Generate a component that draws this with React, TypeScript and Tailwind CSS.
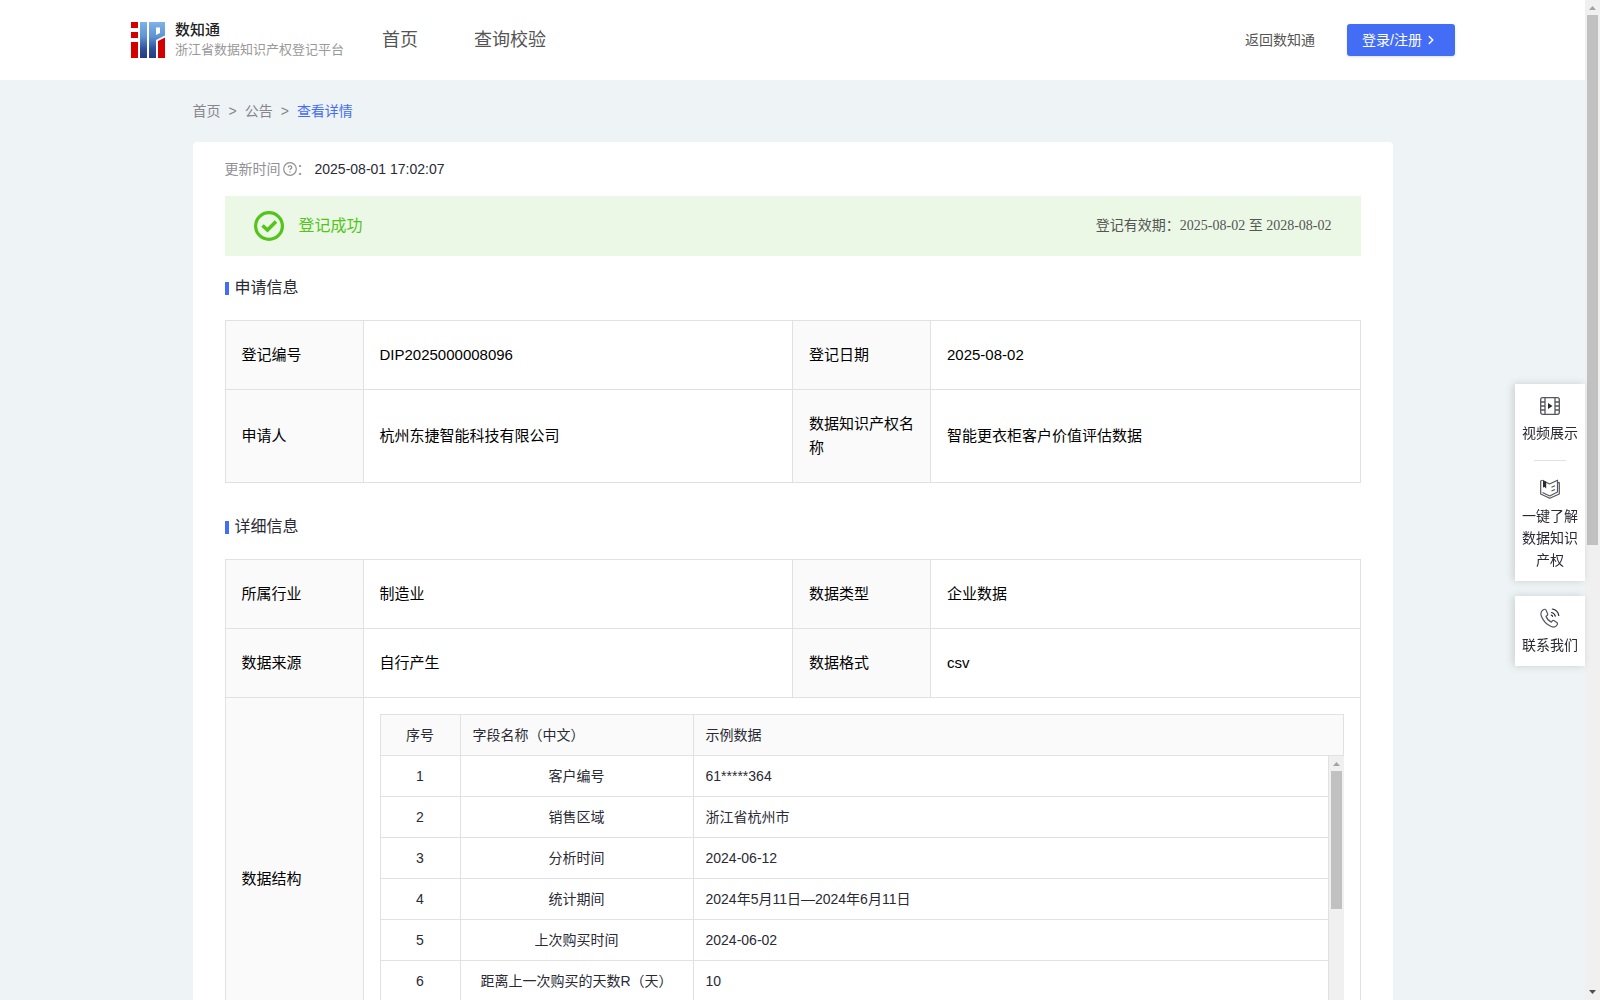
import React from "react";
import { ChevronRight } from "lucide-react";

interface FieldRow {
  name: string;
  sample: string;
}

const fields: FieldRow[] = [
  { name: "客户编号", sample: "61*****364" },
  { name: "销售区域", sample: "浙江省杭州市" },
  { name: "分析时间", sample: "2024-06-12" },
  { name: "统计期间", sample: "2024年5月11日—2024年6月11日" },
  { name: "上次购买时间", sample: "2024-06-02" },
  { name: "距离上一次购买的天数R（天）", sample: "10" },
];

function Logo() {
  return (
    <svg width="34" height="36" viewBox="0 0 34 36" aria-hidden="true">
      <defs>
        <linearGradient id="logoBlue" x1="0" y1="0" x2="0" y2="1">
          <stop offset="0" stopColor="#7fb2e8" />
          <stop offset="0.4" stopColor="#5f94d4" />
          <stop offset="0.75" stopColor="#2f4f9c" />
          <stop offset="1" stopColor="#263a80" />
        </linearGradient>
      </defs>
      <path fill="#d40000" d="M0 0h7v6H0zM0 10h7v6H0zM0 20h7v16H0zM27 19l7-3.500V36h-7z" />
      <path fill="url(#logoBlue)" d="M9 0h7v36H9z" />
      <path fill="url(#logoBlue)" fillRule="evenodd" d="M18 0h16v13.500l-9 4.500v18h-7zM25 5.500v7.500l4-2V5.500z" />
    </svg>
  );
}

function VideoIcon() {
  return (
    <svg width="20" height="20" viewBox="0 0 20 20" fill="none" stroke="#55565e" strokeWidth="1.3" aria-hidden="true">
      <rect x="0.7" y="1.7" width="18.6" height="16.6" rx="2" />
      <path d="M5 2v16M15 2v16M1 6h4M1 10h4M1 14h4M15 6h4M15 10h4M15 14h4" />
      <path d="M8 7v6l4.500-3z" fill="#2a2a35" stroke="none" />
    </svg>
  );
}

function BookIcon() {
  return (
    <svg width="20" height="20" viewBox="0 0 20 20" fill="none" stroke="#55565e" strokeWidth="1.2" strokeLinejoin="round" aria-hidden="true">
      <path d="M2.500 1.200L.7 2v13l9 4.300 9.600-4.300V3.500l-1.800.4" />
      <path d="M2.500 1.200L9.500 5l8-3.800v11.800L9.700 17 2.500 13.500" />
      <path d="M11.500 8.200l3.500-1.500M11.500 12l3.500-1.500" />
      <path d="M3 1.500l3.200 1.600V9.500L4.600 8 3 8.500z" fill="#2a2a35" stroke="none" />
    </svg>
  );
}

function PhoneIcon() {
  return (
    <svg width="20" height="20" viewBox="0 0 20 20" fill="none" stroke="#55565e" strokeWidth="1.2" strokeLinecap="round" strokeLinejoin="round" aria-hidden="true">
      <path d="M3.200 1.800C1 3.300.3 5.500 1.500 8.500c2 5 5.200 8.200 9.700 10 2.800 1.100 4.800.3 6-1.700.5-.9.4-1.600-.4-2.200l-2.600-1.800c-.8-.5-1.500-.4-2.100.3l-.8 1c-2.800-1.300-4.400-3.200-5.300-5.800l1-.7c.8-.6.9-1.200.5-2.100L6.200 2.500c-.6-1.400-1.700-1.600-3-.7z" />
      <path d="M11.500 4.500c2 .4 3.300 1.700 3.800 3.700M12.300 1c3.600.7 5.900 3 6.500 6.500M11.300 7.200c.7.100 1.100.5 1.300 1.200" stroke="#2a2a35" />
    </svg>
  );
}

function HelpIcon() {
  return (
    <svg width="14" height="14" viewBox="0 0 14 14" fill="none" stroke="#909096" aria-hidden="true">
      <circle cx="7" cy="7" r="6.3" strokeWidth="1.2" />
      <path d="M5.200 5.600c0-1 .8-1.700 1.800-1.700s1.800.7 1.800 1.600c0 1.200-1.800 1.300-1.800 2.500" strokeWidth="1.2" />
      <path d="M7 9.200v1.300" strokeWidth="1.3" />
    </svg>
  );
}

function SuccessIcon() {
  return (
    <svg width="30" height="30" viewBox="0 0 30 30" fill="none" stroke="#52c41a" aria-hidden="true">
      <circle cx="15" cy="15" r="13.4" strokeWidth="3.2" />
      <path d="M8.500 14.500l5 4.500 8.500-8.500" strokeWidth="3.6" />
    </svg>
  );
}

function Arrow({ down = false, dark = false }: { down?: boolean; dark?: boolean }) {
  return (
    <svg width="15" height="15" viewBox="0 0 15 15" fill={dark ? "#505050" : "#a3a3a3"} aria-hidden="true">
      <path d={down ? "M4 5h7l-3.500 4z" : "M4 10h7L7.500 6z"} />
    </svg>
  );
}

function SectionTitle({ children }: { children: React.ReactNode }) {
  return (
    <h2 className="flex items-center gap-[6px] text-base leading-6 text-[#2a2a35]">
      <span className="mt-px h-[13px] w-1 bg-[#446df6]" />
      {children}
    </h2>
  );
}

function Label({ children }: { children: React.ReactNode }) {
  return (
    <th scope="row" className="border border-[#e1e1e1] bg-[#fafafa] px-4 py-[22px] text-left font-normal">
      {children}
    </th>
  );
}

function Value({ children }: { children: React.ReactNode }) {
  return <td className="border border-[#e1e1e1] px-4 py-[22px]">{children}</td>;
}

function InfoTable({ children }: { children: React.ReactNode }) {
  return (
    <table className="mt-5 w-full table-fixed border-collapse text-[15px] leading-6 text-black">
      <colgroup>
        <col className="w-[138px]" />
        <col />
        <col className="w-[138px]" />
        <col />
      </colgroup>
      <tbody>{children}</tbody>
    </table>
  );
}

function StructureTable() {
  return (
    <div className="text-sm leading-5 text-[#2a2a35]">
      <table className="w-full table-fixed border-collapse">
        <colgroup>
          <col className="w-20" />
          <col className="w-[233px]" />
          <col />
        </colgroup>
        <thead>
          <tr className="bg-[#fafafa]">
            <th className="border border-[#e1e1e1] py-[10px] font-normal">序号</th>
            <th className="border border-[#e1e1e1] px-3 py-[10px] text-left font-normal">字段名称（中文）</th>
            <th className="border border-[#e1e1e1] px-3 py-[10px] text-left font-normal">示例数据</th>
          </tr>
        </thead>
      </table>
      <div className="flex h-[287px]">
        <div className="flex-1">
          <table className="w-full table-fixed border-collapse">
            <colgroup>
              <col className="w-20" />
              <col className="w-[233px]" />
              <col />
            </colgroup>
            <tbody>
              {fields.map((field, index) => (
                <tr key={field.name}>
                  <td className="border border-t-0 border-[#e1e1e1] py-[10px] text-center">{index + 1}</td>
                  <td className="border border-t-0 border-[#e1e1e1] px-3 py-[10px] text-center">{field.name}</td>
                  <td className="border border-t-0 border-[#e1e1e1] px-3 py-[10px]">{field.sample}</td>
                </tr>
              ))}
            </tbody>
          </table>
        </div>
        <div className="flex w-[15px] flex-col items-center bg-[#f0f0f0]">
          <Arrow />
          <div className="h-[138px] w-[11px] bg-[#c1c1c1]" />
        </div>
      </div>
    </div>
  );
}

function FloatLink({ icon, children }: { icon: React.ReactNode; children: React.ReactNode }) {
  return (
    <a href="#" className="flex flex-col items-center gap-[6px] text-center">
      {icon}
      <span>{children}</span>
    </a>
  );
}

export default function App() {
  return (
    <div className="flex h-screen bg-[#eef3f6] font-['Liberation_Sans','Noto_Sans_CJK_SC',sans-serif]">
      <div className="min-w-0 flex-1 overflow-hidden">
        <header className="flex h-20 items-center bg-white pr-[130px] pl-[131px]">
          <a href="#" className="flex items-center gap-[10px]">
            <Logo />
            <span className="flex flex-col">
              <span className="text-[15px] leading-5 font-medium text-[#222]">数知通</span>
              <span className="text-[13px] leading-5 text-[#999]">浙江省数据知识产权登记平台</span>
            </span>
          </a>
          <nav className="ml-[38px] flex gap-14 text-lg text-[#555]">
            <a href="#">首页</a>
            <a href="#">查询校验</a>
          </nav>
          <div className="ml-auto flex items-center gap-8 text-sm">
            <a href="#" className="text-[#555]">返回数知通</a>
            <button
              type="button"
              className="flex h-8 w-[108px] items-center gap-[2px] rounded-[3px] bg-[#446df6] pl-[15px] text-white shadow-sm"
            >
              登录/注册
              <ChevronRight className="h-[14px] w-[14px]" strokeWidth={2.5} />
            </button>
          </div>
        </header>

        <main className="mx-auto max-w-[1200px]">
          <nav className="flex gap-2 py-5 text-sm leading-[22px] text-[#86868c]">
            <a href="#">首页</a>
            <span>&gt;</span>
            <a href="#">公告</a>
            <span>&gt;</span>
            <a href="#" className="text-[#446df6]">查看详情</a>
          </nav>

          <div className="rounded-[4px] bg-white px-8 py-4">
            <div className="flex items-center text-sm leading-[22px] text-[#909096]">
              <span className="mr-[2px]">更新时间</span>
              <HelpIcon />
              <span>：</span>
              <span className="ml-1 text-[#2a2a35]">2025-08-01 17:02:07</span>
            </div>

            {/* Registration status */}
            <div className="mt-4 flex h-[60px] items-center justify-between bg-[#ebf8e6] px-[29px]">
              <div className="flex items-center gap-[15px] text-base text-[#52c41a]">
                <SuccessIcon />
                登记成功
              </div>
              <div className="font-['Liberation_Serif','Noto_Sans_CJK_SC',serif] text-sm text-[#555]">
                登记有效期：2025-08-02 至 2028-08-02
              </div>
            </div>

            <section className="mt-5">
              <SectionTitle>申请信息</SectionTitle>
              <InfoTable>
                <tr>
                  <Label>登记编号</Label>
                  <Value>DIP2025000008096</Value>
                  <Label>登记日期</Label>
                  <Value>2025-08-02</Value>
                </tr>
                <tr>
                  <Label>申请人</Label>
                  <Value>杭州东捷智能科技有限公司</Value>
                  <Label>数据知识产权名称</Label>
                  <Value>智能更衣柜客户价值评估数据</Value>
                </tr>
              </InfoTable>
            </section>

            <section className="mt-8">
              <SectionTitle>详细信息</SectionTitle>
              <InfoTable>
                <tr>
                  <Label>所属行业</Label>
                  <Value>制造业</Value>
                  <Label>数据类型</Label>
                  <Value>企业数据</Value>
                </tr>
                <tr>
                  <Label>数据来源</Label>
                  <Value>自行产生</Value>
                  <Label>数据格式</Label>
                  <Value>csv</Value>
                </tr>
                <tr>
                  <Label>数据结构</Label>
                  <td colSpan={3} className="border border-[#e1e1e1] p-4">
                    <StructureTable />
                  </td>
                </tr>
              </InfoTable>
            </section>
          </div>
        </main>
      </div>

      {/* Page scrollbar */}
      <div className="flex w-[15px] shrink-0 flex-col items-center bg-[#f0f0f0]">
        <Arrow />
        <div className="h-[530px] w-[11px] bg-[#c1c1c1]" />
        <div className="mt-auto">
          <Arrow down dark />
        </div>
      </div>

      {/* Floating shortcuts */}
      <aside className="fixed top-96 right-[15px] flex w-[70px] flex-col gap-[15px] text-sm leading-[22px] text-[#2a2a35]">
        <div className="bg-white px-[7px] pt-3 pb-[10px] shadow-[-2px_0_8px_rgba(0,0,0,0.15)]">
          <FloatLink icon={<VideoIcon />}>视频展示</FloatLink>
          <hr className="mx-auto mt-4 mb-[18px] w-8 border-[#e1e1e1]" />
          <FloatLink icon={<BookIcon />}>一键了解数据知识产权</FloatLink>
        </div>
        <div className="bg-white px-[7px] pt-3 pb-[10px] shadow-[-2px_0_8px_rgba(0,0,0,0.15)]">
          <FloatLink icon={<PhoneIcon />}>联系我们</FloatLink>
        </div>
      </aside>
    </div>
  );
}
